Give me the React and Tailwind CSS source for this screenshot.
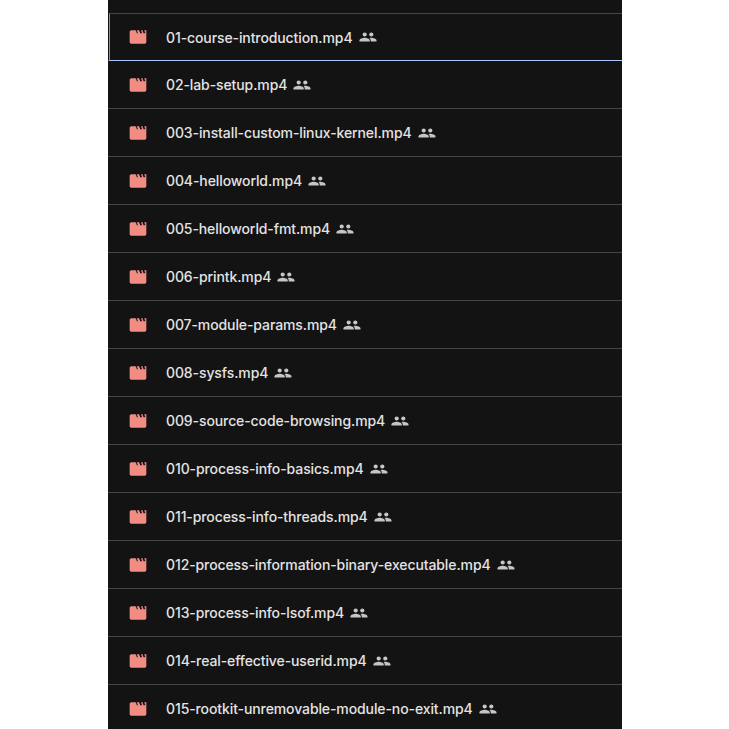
const files = [
  '01-course-introduction.mp4',
  '02-lab-setup.mp4',
  '003-install-custom-linux-kernel.mp4',
  '004-helloworld.mp4',
  '005-helloworld-fmt.mp4',
  '006-printk.mp4',
  '007-module-params.mp4',
  '008-sysfs.mp4',
  '009-source-code-browsing.mp4',
  '010-process-info-basics.mp4',
  '011-process-info-threads.mp4',
  '012-process-information-binary-executable.mp4',
  '013-process-info-lsof.mp4',
  '014-real-effective-userid.mp4',
  '015-rootkit-unremovable-module-no-exit.mp4',
];

function MovieIcon() {
  return (
    <svg className="w-5 h-5 shrink-0 text-[#f28b82]" viewBox="0 0 24 24" fill="currentColor">
      <path
        fillRule="evenodd"
        d="M4 4h18v14c0 1.1-.9 2-2 2H4c-1.1 0-2-.9-2-2V6c0-1.1.9-2 2-2zm5.2 0l1.5 3.4h1.3L10.5 4zm4 0l1.5 3.4H17L15.500 4zm4 0l1.500 3.400H21L19.500 4z"
      />
    </svg>
  );
}

function SharedIcon() {
  return (
    <svg className="w-[18px] h-[18px] shrink-0 text-[#c4c7c5]" viewBox="0 0 18 18" fill="currentColor">
      <circle cx="5.700" cy="6.500" r="2.100" />
      <circle cx="12.300" cy="6.500" r="2.100" />
      <path d="M.5 13.500v-1.300c0-1.500 3.300-2.500 5.200-2.500s5 1 5 2.500v1.300z" />
      <path d="M11.700 13.500v-1.300c0-.9-.4-1.600-1.100-2.200.6-.2 1.200-.3 1.700-.3 1.900 0 5.200 1 5.200 2.500v1.300z" />
    </svg>
  );
}

export default function App() {
  return (
    <div className="h-[729px] overflow-hidden bg-white pl-[108px] font-['Inter',sans-serif]">
      <div className="w-[514px] h-full bg-[#131314] pt-[13px]">
        {files.map((name, i) => (
          <div
            key={name}
            className={
              i === 0
                ? 'h-12 flex items-center pl-[18px] gap-[18px] border-t border-[#444746] -mb-px relative border-b border-l border-b-[#a8c7fa] border-l-[#7a92bd] ml-px'
                : 'h-12 flex items-center pl-5 gap-[18px] border-t border-[#444746]'
            }
          >
            <MovieIcon />
            <div className="flex items-center gap-[6px]">
              <span className="text-[14px] leading-5 pt-px font-medium tracking-[-0.1px] text-[#e3e3e3] whitespace-nowrap">{name}</span>
              <SharedIcon />
            </div>
          </div>
        ))}
      </div>
    </div>
  );
}
